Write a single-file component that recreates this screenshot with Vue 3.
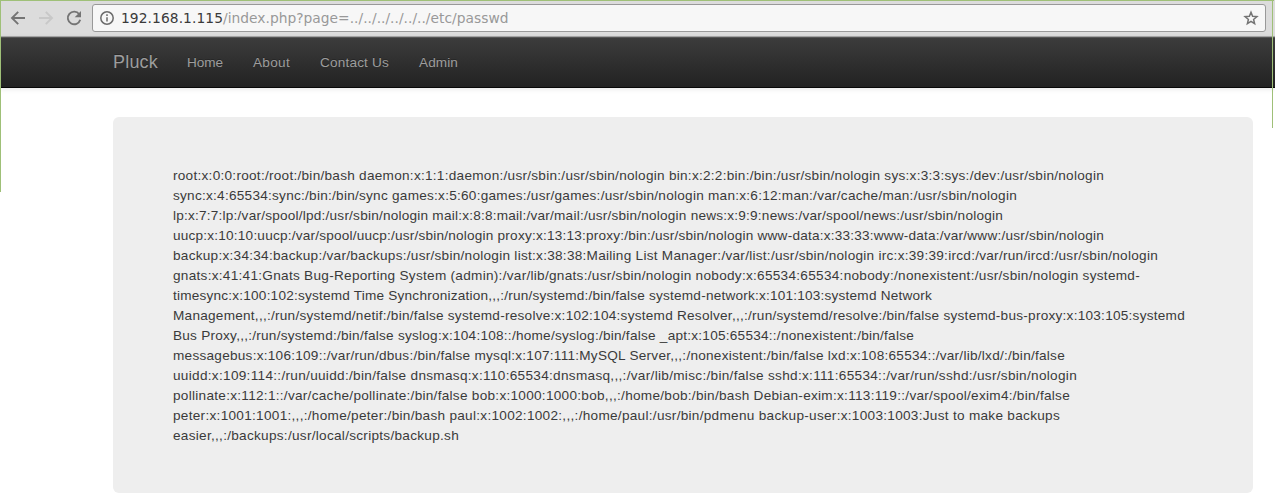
<script setup>
import { ref, onMounted, nextTick } from 'vue'

const nav = [
  { text: 'Home', width: 36 },
  { text: 'About', width: 37 },
  { text: 'Contact Us', width: 69 },
  { text: 'Admin', width: 39 },
]

const lines = [
  { text: 'root:x:0:0:root:/root:/bin/bash daemon:x:1:1:daemon:/usr/sbin:/usr/sbin/nologin bin:x:2:2:bin:/bin:/usr/sbin/nologin sys:x:3:3:sys:/dev:/usr/sbin/nologin', width: 931 },
  { text: 'sync:x:4:65534:sync:/bin:/bin/sync games:x:5:60:games:/usr/games:/usr/sbin/nologin man:x:6:12:man:/var/cache/man:/usr/sbin/nologin', width: 844 },
  { text: 'lp:x:7:7:lp:/var/spool/lpd:/usr/sbin/nologin mail:x:8:8:mail:/var/mail:/usr/sbin/nologin news:x:9:9:news:/var/spool/news:/usr/sbin/nologin', width: 830 },
  { text: 'uucp:x:10:10:uucp:/var/spool/uucp:/usr/sbin/nologin proxy:x:13:13:proxy:/bin:/usr/sbin/nologin www-data:x:33:33:www-data:/var/www:/usr/sbin/nologin', width: 931 },
  { text: 'backup:x:34:34:backup:/var/backups:/usr/sbin/nologin list:x:38:38:Mailing List Manager:/var/list:/usr/sbin/nologin irc:x:39:39:ircd:/var/run/ircd:/usr/sbin/nologin', width: 985 },
  { text: 'gnats:x:41:41:Gnats Bug-Reporting System (admin):/var/lib/gnats:/usr/sbin/nologin nobody:x:65534:65534:nobody:/nonexistent:/usr/sbin/nologin systemd-', width: 967 },
  { text: 'timesync:x:100:102:systemd Time Synchronization,,,:/run/systemd:/bin/false systemd-network:x:101:103:systemd Network', width: 759 },
  { text: 'Management,,,:/run/systemd/netif:/bin/false systemd-resolve:x:102:104:systemd Resolver,,,:/run/systemd/resolve:/bin/false systemd-bus-proxy:x:103:105:systemd', width: 1012 },
  { text: 'Bus Proxy,,,:/run/systemd:/bin/false syslog:x:104:108::/home/syslog:/bin/false _apt:x:105:65534::/nonexistent:/bin/false', width: 741 },
  { text: 'messagebus:x:106:109::/var/run/dbus:/bin/false mysql:x:107:111:MySQL Server,,,:/nonexistent:/bin/false lxd:x:108:65534::/var/lib/lxd/:/bin/false', width: 892 },
  { text: 'uuidd:x:109:114::/run/uuidd:/bin/false dnsmasq:x:110:65534:dnsmasq,,,:/var/lib/misc:/bin/false sshd:x:111:65534::/var/run/sshd:/usr/sbin/nologin', width: 904 },
  { text: 'pollinate:x:112:1::/var/cache/pollinate:/bin/false bob:x:1000:1000:bob,,,:/home/bob:/bin/bash Debian-exim:x:113:119::/var/spool/exim4:/bin/false', width: 897 },
  { text: 'peter:x:1001:1001:,,,:/home/peter:/bin/bash paul:x:1002:1002:,,,:/home/paul:/usr/bin/pdmenu backup-user:x:1003:1003:Just to make backups', width: 887 },
  { text: 'easier,,,:/backups:/usr/local/scripts/backup.sh', width: 286 },
]

const root = ref(null)

// Spread each run of text over its measured width.
onMounted(async () => {
  await nextTick()
  root.value.querySelectorAll('[data-width]').forEach((el) => {
    const natural = el.getBoundingClientRect().width
    const gap = (Number(el.dataset.width) - natural) / el.textContent.length
    el.style.letterSpacing = `${gap}px`
  })
})
</script>

<template>
  <div ref="root" class="page">
    <header class="toolbar">
      <svg class="tool" viewBox="0 0 16 16"><path d="M15 8H2M8.2 1.8 2 8l6.2 6.2" /></svg>
      <svg class="tool off" viewBox="0 0 16 16"><path d="M1 8h13M7.8 1.8 14 8l-6.2 6.2" /></svg>
      <svg class="tool" viewBox="0 0 16 16"><path d="M13.2 4.2A6.3 6.3 0 1 0 14.2 9.7" /><path class="solid" d="M15 1v6.3H8.7z" /></svg>
      <div class="address">
        <svg class="info" viewBox="0 0 14 14"><circle cx="7" cy="7" r="6.2" /><path d="M7 6.2v4.3M7 3.3v1.7" /></svg>
        <div class="url"><span class="host" data-width="102">192.168.1.115</span><span data-width="285.5">/index.php?page=../../../../../../etc/passwd</span></div>
        <svg class="star" viewBox="0 0 16 16"><path d="m8 2.2 1.6 4.1 4.3.3-3.3 2.8 1 4.2L8 11.3l-3.6 2.3 1-4.2-3.3-2.8 4.3-.3z" /></svg>
      </div>
    </header>
    <nav class="navbar">
      <a class="brand"><span data-width="45">Pluck</span></a>
      <a v-for="item in nav" :key="item.text" class="link"><span :data-width="item.width">{{ item.text }}</span></a>
    </nav>
    <main class="jumbotron">
      <div v-for="line in lines" :key="line.text" class="line"><span :data-width="line.width">{{ line.text }}</span></div>
    </main>
    <i class="edge top"></i>
    <i class="edge left"></i>
    <i class="edge right"></i>
  </div>
</template>

<style>
body { background: #fff; overflow: hidden; }
</style>

<style scoped>
.page {
  position: relative;
  height: 502px;
  overflow: hidden;
  font: 13.6px/20px "Liberation Sans", Arial, sans-serif;
  color: #3a3a3a;
}
.page span { display: inline-block; white-space: pre; }
.toolbar {
  box-sizing: border-box;
  height: 37px;
  padding: 4px 9px 5px 10px;
  display: flex;
  align-items: center;
  background: #dcdcdc;
  border-bottom: 1px solid #a8a8a8;
}
.tool {
  width: 16px;
  height: 16px;
  margin-right: 12px;
  fill: none;
  stroke: #747474;
  stroke-width: 1.9;
}
.tool .solid { fill: #747474; stroke: none; }
.tool.off { stroke: #c8c8c8; }
.address {
  box-sizing: border-box;
  flex: 1;
  height: 28px;
  margin-left: -2px;
  padding: 0 6px 0 7px;
  display: flex;
  align-items: center;
  background: #f7f7f7;
  border: 1px solid #999;
  border-radius: 3px;
}
.info { width: 14px; height: 14px; fill: none; stroke: #6b6b6b; stroke-width: 1.5; }
.url { flex: 1; margin-left: 7px; font-family: "DejaVu Sans", sans-serif; font-size: 13.8px; color: #999; }
.url .host { color: #3a3a3a; }
.star { width: 16px; height: 16px; fill: none; stroke: #747474; stroke-width: 1.5; }
.navbar {
  box-sizing: border-box;
  height: 51px;
  padding: 0 0 2px 113px;
  display: flex;
  align-items: center;
  background: linear-gradient(#3c3c3c, #222);
  border-top: 1px solid #555;
  border-bottom: 1px solid #080808;
  box-shadow: 0 1px 5px rgba(0, 0, 0, 0.1);
  color: #9d9d9d;
  text-shadow: 0 -1px 0 rgba(0, 0, 0, 0.25);
}
.brand { margin-right: 14px; font-size: 18px; }
.link { padding: 2px 15px 0; }
.jumbotron {
  box-sizing: border-box;
  width: 1140px;
  height: 376px;
  margin: 29px 0 0 113px;
  padding: 49px 60px 47px;
  background: #eee;
  border-radius: 6px;
}
.line { height: 20px; }
.edge { position: absolute; background: #9fc078; }
.top { top: 0; left: 0; width: 1274px; height: 1px; }
.left { top: 0; left: 0; width: 1px; height: 192px; }
.right { top: 0; left: 1272px; width: 1px; height: 128px; }
</style>
